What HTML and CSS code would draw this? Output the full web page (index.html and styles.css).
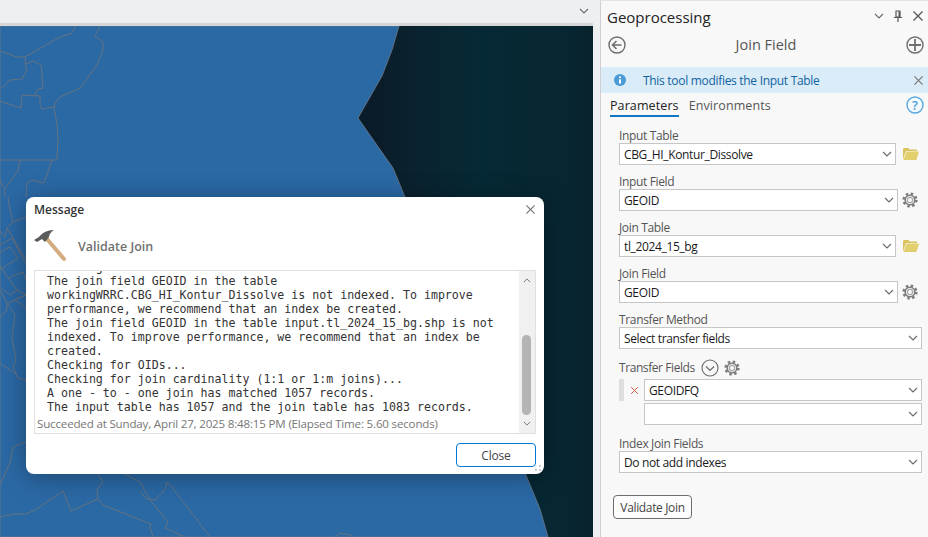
FILE: index.html
```html
<!DOCTYPE html>
<html>
  <head>
    <meta charset="UTF-8" />
    <title>Join Field</title>
    <link rel="stylesheet" href="styles.css">
  </head>
  <body>
    <svg class="icon-defs" width="0" height="0">
      <symbol id="chevron" viewBox="0 0 10 6">
        <path d="M1 1l4 4 4-4" fill="none" stroke="#6a6a6a" stroke-width="1.100" />
      </symbol>
      <symbol id="cross" viewBox="0 0 12 12">
        <path d="M1.500 1.500l9 9M10.500 1.500l-9 9" fill="none" stroke="currentColor" stroke-width="1.300" />
      </symbol>
      <symbol id="gear" viewBox="0 0 16 16">
        <circle cx="8" cy="8" r="6.200" fill="none" stroke="#7d7d7d" stroke-width="2.800" stroke-dasharray="2.400 2.470" />
        <circle cx="8" cy="8" r="4.800" fill="none" stroke="#7d7d7d" stroke-width="1.600" />
        <circle cx="8" cy="8" r="2.600" fill="none" stroke="#a8a8a8" stroke-width="1.200" />
      </symbol>
      <symbol id="folder" viewBox="0 0 16 12">
        <path d="M0 11.500V1L1 0h4.500l1 1.500H14V3H3L0 11.500z" fill="#d8c35c" />
        <path d="M0.500 12L3.500 3.500H16L13.500 12z" fill="#e2cf6e" />
      </symbol>
    </svg>

    <div class="app">
      <main class="workspace">
        <div class="topbar">
          <svg class="chevron"><use href="#chevron" /></svg>
        </div>
        <div class="map">
          <svg class="map-art" viewBox="0 26 593 511">
            <path class="land" d="M0 26H399L392 50 382 76 358 118 393 168 405 197 528 480 540 509 548 537H0z" />
            <g class="tract-lines">
              <path d="M76 26L72 33 60 37 25 57 17 57 0 51" />
              <path d="M100 26L95 36 103 42 103 50 97 65 80 88 60 97 55 103 54 107 47 108 42 109 40 105 40 96 22 95 21 108 0 101" />
              <path d="M54 107L57 125 58 138 57 160H0" />
              <path d="M25 57L26 68 27 70 22 79 10 80 0 89" />
              <path d="M26 64L33 61 41 65 42 75 43 88 38 89 35 95" />
              <path d="M20 160L18 171 4 190 5 197M52 160L45 180 43 183 32 180 27 183 26 197M0 180L4 188" />
              <path d="M8 197L10 210 13 222 7 228 5 237 0 231M13 222L26 217M7 228L26 260M0 245L12 238 26 265" />
              <path d="M0 252L10 247 18 258 0 270M0 265L8 278 23 272 26 280M8 278L17 290 10 295 0 287M17 290L26 295 8 303" />
              <path d="M0 290L7 303 7 310 0 318M7 303L15 315 12 337 16 360 13 367 18 378 26 380M0 363L17 375M26 295L15 300 26 308" />
              <path d="M26 442L13 447 10 463 0 485" />
              <path d="M0 517L14 514 26 514 35 510 63 491 71 511 98 499 103 505 151 524 150 527 153 537" />
              <path d="M98 499L97 490 103 482 98 474M125 474L140 482 150 500 168 522 165 528 185 537" />
              <path d="M140 492L147 499 155 500 165 490 167 482 171 486 210 537M335 537L340 533 350 535 353 537" />
            </g>
          </svg>
        </div>

        <section class="dialog">
          <div class="dialog-head">
            <span class="dialog-title">Message</span>
            <svg class="dialog-close"><use href="#cross" /></svg>
          </div>
          <div class="dialog-tool">
            <svg class="hammer" viewBox="0 0 34 34">
              <path d="M14 10L31 30" stroke="#d3ac80" stroke-width="4" stroke-linecap="round" />
              <path d="M1 11l5-3c3-4 8-7 15-7-3 2-5 4-5 7l-4 5-3-3-5 3z" fill="#5c5c5c" />
            </svg>
            <span class="dialog-tool-name">Validate Join</span>
          </div>
          <div class="log">
            <div class="log-main">
              <pre class="log-text">Checking for indexes...
The join field GEOID in the table
workingWRRC.CBG_HI_Kontur_Dissolve is not indexed. To improve
performance, we recommend that an index be created.
The join field GEOID in the table input.tl_2024_15_bg.shp is not
indexed. To improve performance, we recommend that an index be
created.
Checking for OIDs...
Checking for join cardinality (1:1 or 1:m joins)...
A one - to - one join has matched 1057 records.
The input table has 1057 and the join table has 1083 records.</pre>
              <div class="log-status">Succeeded at Sunday, April 27, 2025 8:48:15 PM (Elapsed Time: 5.60 seconds)</div>
            </div>
            <div class="scrollbar">
              <svg class="scroll-up"><use href="#chevron" /></svg>
              <div class="scroll-track"><div class="scroll-thumb"></div></div>
              <svg class="scroll-down"><use href="#chevron" /></svg>
            </div>
          </div>
          <div class="dialog-foot">
            <button class="close-btn">Close</button>
          </div>
          <div class="grip"><i></i><i></i><i></i></div>
        </section>
      </main>

      <aside class="pane">
        <div class="pane-head">
          <span class="pane-title">Geoprocessing</span>
          <div class="pane-actions">
            <svg class="chevron"><use href="#chevron" /></svg>
            <svg class="pin" viewBox="0 0 10 13">
              <path d="M2.500 1h5M3 1v6h4V1M1 7.500h8M5 8v4" fill="none" stroke="#555" stroke-width="1.200" />
              <path d="M5.500 1.500h1.500v5.500h-1.500z" fill="#555" />
            </svg>
            <svg class="pane-close"><use href="#cross" /></svg>
          </div>
        </div>
        <div class="tool-bar">
          <svg class="round-btn" viewBox="0 0 18 18">
            <circle cx="9" cy="9" r="8" fill="none" stroke="#6e6e6e" stroke-width="1.400" />
            <path d="M13.500 9h-9M8.500 5l-4 4 4 4" fill="none" stroke="#6e6e6e" stroke-width="1.600" />
          </svg>
          <span class="tool-name">Join Field</span>
          <svg class="round-btn" viewBox="0 0 18 18">
            <circle cx="9" cy="9" r="8" fill="none" stroke="#6e6e6e" stroke-width="1.400" />
            <path d="M9 3v12M3 9h12" fill="none" stroke="#6e6e6e" stroke-width="1.800" />
          </svg>
        </div>
        <div class="banner">
          <svg class="info" viewBox="0 0 12 12">
            <circle cx="6" cy="6" r="6" fill="#4a9bd6" />
            <path d="M5 2.500h2v1.600H5zM5 5.200h2v4.400H5z" fill="#fff" />
          </svg>
          <span class="banner-text">This tool modifies the Input Table</span>
          <svg class="banner-close"><use href="#cross" /></svg>
        </div>
        <div class="tabs">
          <span class="tab active">Parameters</span>
          <span class="tab">Environments</span>
          <svg class="help" viewBox="0 0 18 18">
            <circle cx="9" cy="9" r="8" fill="#f4fafe" stroke="#5aa9e0" stroke-width="1.400" />
            <text x="9" y="13.500" class="help-mark">?</text>
          </svg>
        </div>

        <div class="form">
          <div class="field">
            <label class="label">Input Table</label>
            <div class="row">
              <div class="select short">CBG_HI_Kontur_Dissolve<svg class="chevron"><use href="#chevron" /></svg></div>
              <svg class="folder"><use href="#folder" /></svg>
            </div>
          </div>
          <div class="field">
            <label class="label">Input Field</label>
            <div class="row">
              <div class="select mid">GEOID<svg class="chevron"><use href="#chevron" /></svg></div>
              <svg class="gear"><use href="#gear" /></svg>
            </div>
          </div>
          <div class="field">
            <label class="label">Join Table</label>
            <div class="row">
              <div class="select short">tl_2024_15_bg<svg class="chevron"><use href="#chevron" /></svg></div>
              <svg class="folder"><use href="#folder" /></svg>
            </div>
          </div>
          <div class="field">
            <label class="label">Join Field</label>
            <div class="row">
              <div class="select mid">GEOID<svg class="chevron"><use href="#chevron" /></svg></div>
              <svg class="gear"><use href="#gear" /></svg>
            </div>
          </div>
          <div class="field">
            <label class="label">Transfer Method</label>
            <div class="select">Select transfer fields<svg class="chevron"><use href="#chevron" /></svg></div>
          </div>

          <div class="field multi">
            <div class="label multi-label">
              Transfer Fields
              <svg class="expand" viewBox="0 0 18 18">
                <circle cx="9" cy="9" r="8" fill="none" stroke="#6a6a6a" stroke-width="1.100" />
                <path d="M5 7.500l4 4 4-4" fill="none" stroke="#6a6a6a" stroke-width="1.200" />
              </svg>
              <svg class="gear"><use href="#gear" /></svg>
            </div>
            <div class="multi-row">
              <span class="handle"></span>
              <svg class="remove"><use href="#cross" /></svg>
              <div class="select">GEOIDFQ<svg class="chevron"><use href="#chevron" /></svg></div>
            </div>
            <div class="multi-row">
              <span class="handle blank"></span>
              <span class="remove"></span>
              <div class="select"><svg class="chevron"><use href="#chevron" /></svg></div>
            </div>
          </div>

          <div class="field">
            <label class="label">Index Join Fields</label>
            <div class="select">Do not add indexes<svg class="chevron"><use href="#chevron" /></svg></div>
          </div>
        </div>

        <button class="run-btn">Validate Join</button>
      </aside>
    </div>
  </body>
</html>
```

FILE: styles.css
```css
* {
  box-sizing: border-box;
}
html, body {
  margin: 0;
  height: 100%;
  overflow: hidden;
}
body {
  font-family: "Open Sans", "Noto Sans", sans-serif;
  font-size: 12px;
  color: #222;
  background-color: #eeeff1;
}
.icon-defs {
  position: absolute;
}
.app {
  display: flex;
  height: 537px;
}
.chevron {
  width: 10px;
  height: 6px;
}

/* Map side */
.workspace {
  position: relative;
  display: flex;
  flex-direction: column;
  width: 600px;
  padding-right: 7px;
}
.topbar {
  display: flex;
  justify-content: flex-end;
  align-items: center;
  height: 26px;
  padding: 0 4px 1px 0;
  border-bottom: 3px solid #d6d6d6;
}
.map {
  flex: 1;
  background: linear-gradient(90deg, #0a1c29 380px, #0a2330 420px, #052935 480px, #072631 570px, #08222d 593px);
}
.map-art {
  display: block;
  width: 593px;
  height: 511px;
}
.land {
  fill: #2b69a5;
  stroke: #6d7a86;
  stroke-width: 0.8;
}
.tract-lines path {
  fill: none;
  stroke: #667280;
  stroke-width: 1;
}

/* Message dialog */
.dialog {
  position: absolute;
  left: 26px;
  top: 197px;
  display: flex;
  flex-direction: column;
  width: 518px;
  height: 277px;
  padding: 0 8px;
  background-color: #fff;
  border-radius: 8px;
  box-shadow: 0 3px 26px rgba(0, 0, 0, 0.34);
}
.dialog-head {
  display: flex;
  justify-content: space-between;
  align-items: center;
  height: 25px;
  padding-bottom: 1px;
}
.dialog-title {
  font-weight: 600;
  font-size: 12px;
  color: #333;
}
.dialog-close {
  width: 11px;
  height: 11px;
  color: #777;
}
.dialog-tool {
  display: flex;
  align-items: center;
  gap: 11px;
  height: 48px;
}
.hammer {
  width: 34px;
  height: 34px;
  margin-left: -1px;
}
.dialog-tool-name {
  font-size: 12.500px;
  font-weight: 600;
  color: #707070;
}
.log {
  display: flex;
  height: 164px;
  border: 1px solid #e0e0e0;
}
.log-main {
  flex: 1;
  display: flex;
  flex-direction: column;
  min-width: 0;
}
.log-text {
  flex: 1;
  display: flex;
  flex-direction: column;
  justify-content: flex-end;
  margin: 0;
  padding-left: 12px;
  overflow: hidden;
  font-family: "DejaVu Sans Mono", "Liberation Mono", monospace;
  font-size: 11.600px;
  line-height: 14px;
  color: #333;
}
.log-status {
  flex: none;
  height: 19px;
  padding-left: 2px;
  font-size: 11.600px;
  letter-spacing: -0.19px;
  line-height: 19px;
  color: #777;
  white-space: nowrap;
}
.scrollbar {
  flex: none;
  display: flex;
  flex-direction: column;
  align-items: center;
  width: 16px;
  background-color: #f0f0f0;
}
.scroll-up {
  flex: none;
  width: 8px;
  height: 5px;
  margin: 7px 0 4px;
  transform: scaleY(-1);
}
.scroll-track {
  flex: 1;
  width: 9px;
  margin-left: -2px;
}
.scroll-thumb {
  height: 80px;
  margin-top: 48px;
  background-color: #b4b4b4;
  border-radius: 5px;
}
.scroll-down {
  flex: none;
  width: 8px;
  height: 5px;
  margin: 6px 0 7px;
}
.dialog-foot {
  display: flex;
  justify-content: flex-end;
  padding-top: 9px;
}
.close-btn {
  width: 80px;
  height: 24px;
  padding: 0;
  font: inherit;
  letter-spacing: -0.2px;
  color: #444;
  background-color: #fff;
  border: 1px solid #0078d4;
  border-radius: 4px;
}
.grip {
  position: absolute;
  right: 3px;
  bottom: 3px;
  display: grid;
  grid-template-columns: repeat(2, 2px);
  gap: 2px;
}
.grip i {
  width: 2px;
  height: 2px;
  background-color: #cfcfcf;
}
.grip i:nth-child(1) {
  grid-column: 2;
  grid-row: 1;
}
.grip i:nth-child(2) {
  grid-column: 1;
  grid-row: 2;
}
.grip i:nth-child(3) {
  grid-column: 2;
  grid-row: 2;
}

/* Geoprocessing pane */
.pane {
  position: relative;
  width: 328px;
  background-color: #f8f8f8;
  border-left: 1px solid #cfcfcf;
  border-top: 1px solid #e3e3e3;
}
.pane-head {
  display: flex;
  justify-content: space-between;
  align-items: center;
  height: 33px;
  padding: 0 4px 2px 6px;
}
.pane-title {
  font-size: 15px;
  color: #222;
}
.pane-actions {
  display: flex;
  align-items: center;
  gap: 9px;
  margin-bottom: 1px;
}
.pin {
  width: 10px;
  height: 13px;
}
.pane-close {
  width: 12px;
  height: 12px;
  color: #555;
}
.tool-bar {
  display: flex;
  justify-content: space-between;
  align-items: center;
  height: 22px;
  padding: 0 4px 0 7px;
}
.round-btn {
  width: 18px;
  height: 18px;
}
.tool-name {
  margin-bottom: 2px;
  font-size: 14.500px;
  color: #555;
}
.banner {
  display: flex;
  align-items: center;
  height: 26px;
  margin-top: 11px;
  padding: 0 4px 0 13px;
  background-color: #d9ecf7;
}
.info {
  width: 12px;
  height: 12px;
}
.banner-text {
  flex: 1;
  margin-left: 17px;
  font-size: 12px;
  letter-spacing: -0.3px;
  color: #13639f;
}
.banner-close {
  width: 11px;
  height: 11px;
  color: #777;
}
.tabs {
  position: relative;
  display: flex;
  gap: 10px;
  height: 24px;
  padding: 4px 4px 0 9px;
}
.tab {
  height: 20px;
  font-size: 12.500px;
  line-height: 17px;
  letter-spacing: 0.1px;
  color: #555;
}
.tab.active {
  color: #222;
  border-bottom: 2px solid #0f78c2;
}
.help {
  width: 18px;
  height: 18px;
  margin: -1px 0 0 auto;
}
.help-mark {
  font-size: 13px;
  font-weight: 600;
  text-anchor: middle;
  fill: #4a9bd6;
}
.form {
  padding: 2px 6px 0 18px;
}
.label {
  display: block;
  height: 24px;
  padding-top: 10px;
  font-size: 12px;
  line-height: 14px;
  letter-spacing: -0.35px;
  color: #555;
}
.row {
  display: flex;
  align-items: center;
}
.select {
  flex: 1;
  display: flex;
  justify-content: space-between;
  align-items: center;
  height: 22px;
  padding: 0 3px 0 4px;
  font-size: 12px;
  letter-spacing: -0.36px;
  color: #1a1a1a;
  background-color: #fff;
  border: 1px solid #c6c6c6;
}
.select .chevron {
  margin-left: auto;
}
.short + .folder {
  flex: none;
  width: 16px;
  height: 12px;
  margin: 0 3px 0 7px;
}
.mid + .gear {
  flex: none;
  margin: 0 4px 0 4px;
}
.gear {
  width: 16px;
  height: 16px;
}
.multi {
  padding-top: 7px;
  margin-bottom: 1px;
}
.multi-label {
  display: flex;
  align-items: center;
  gap: 6px;
  height: 23px;
  padding-top: 0;
  letter-spacing: -0.42px;
}
.expand {
  width: 18px;
  height: 18px;
}
.multi-label .gear {
  margin-left: -1px;
}
.multi-row {
  display: flex;
  align-items: center;
  margin-bottom: 2px;
}
.handle {
  flex: none;
  width: 5px;
  height: 22px;
  background-color: #dedede;
}
.handle.blank {
  background: none;
}
.remove {
  flex: none;
  width: 9px;
  height: 9px;
  margin: 0 5px 0 6px;
  color: #c9573c;
}
.run-btn {
  display: block;
  width: 79px;
  height: 24px;
  margin: 22px 0 0 12px;
  padding: 0;
  font: inherit;
  letter-spacing: -0.35px;
  color: #444;
  background-color: #fdfdfd;
  border: 1px solid #6e6e6e;
  border-radius: 4px;
}
```
